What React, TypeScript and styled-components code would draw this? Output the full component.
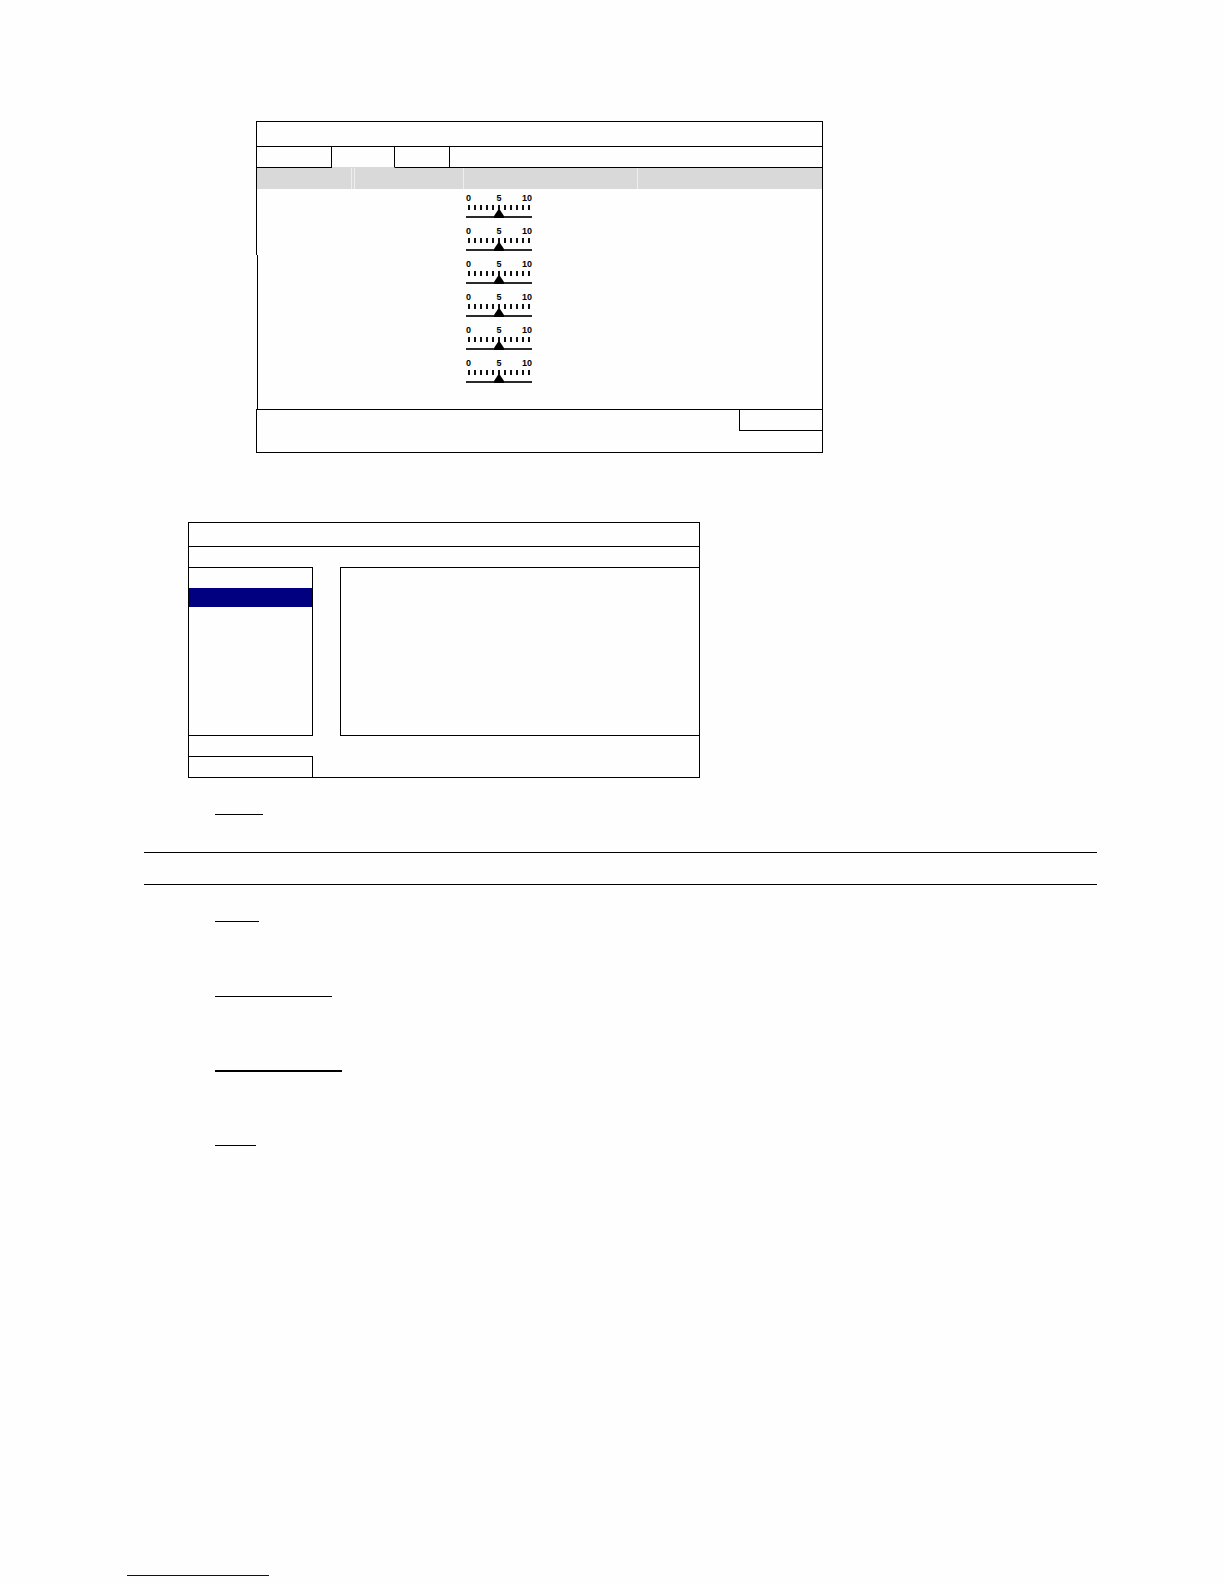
import { useState } from 'react'
import styled, { createGlobalStyle, css } from 'styled-components'

const colors = {
  page: '#fefefe',
  line: '#000000',
  header: '#d9d9d9',
  divider: '#efefef',
  selected: '#000080',
  link: '#0000a0',
}

const line = `1px solid ${colors.line}`

const GlobalStyle = createGlobalStyle`
  *,
  *::before,
  *::after {
    box-sizing: border-box;
  }

  body {
    margin: 0;
    background: ${colors.page};
    font-family: 'Liberation Sans', Arial, sans-serif;
    color: ${colors.line};
  }
`

const Page = styled.div`
  display: flex;
  flex-direction: column;
  min-height: 100vh;
  padding: 121px 127px 8px;
`

const resetButton = css`
  display: block;
  margin: 0;
  padding: 0;
  border: 0;
  border-radius: 0;
  background: transparent;
  font: inherit;
  cursor: pointer;
`

/* Sensitivity panel */

const SetupPanel = styled.section`
  width: 100%;
  max-width: 567px;
  margin-left: 129px;
  border-top: ${line};
  border-right: ${line};
`

const SetupTitle = styled.header`
  height: 25px;
  border-left: ${line};
  border-bottom: ${line};
`

const TabBar = styled.nav`
  display: flex;
  height: 21px;
  border-left: ${line};
`

const Tab = styled.button<{ $width: number; $active: boolean }>`
  ${resetButton}
  width: ${props => props.$width}px;
  border-right: ${line};
  border-bottom: 1px solid ${props => (props.$active ? colors.header : colors.line)};
`

const TabFiller = styled.div`
  flex: 1;
  border-bottom: ${line};
`

const ColumnHeader = styled.div`
  display: grid;
  grid-template-columns: 98px 109px 174px 1fr;
  height: 21px;
  border-left: ${line};
  background: ${colors.header};
`

const ColumnCell = styled.div<{ $divider?: 'single' | 'double' }>`
  border-right: ${props => {
    if (props.$divider === 'double') return `4px double ${colors.divider}`
    return props.$divider ? `1px solid ${colors.divider}` : '0'
  }};
`

const SettingRows = styled.div<{ $inset?: boolean }>`
  margin-left: ${props => (props.$inset ? 1 : 0)}px;
  padding-left: ${props => (props.$inset ? 208 : 209)}px;
  padding-bottom: ${props => (props.$inset ? 22 : 0)}px;
  border-left: ${line};
`

const SettingRow = styled.div`
  height: 33px;
  padding-top: 5px;
`

const Gauge = styled.label`
  display: block;
  width: 66px;
`

const Scale = styled.span`
  display: flex;
  justify-content: space-between;
  height: 8px;
  margin-bottom: 3px;
  font-size: 9px;
  font-weight: 700;
  line-height: 8px;
`

const ScaleMark = styled.span`
  flex: 1;

  &:nth-child(2) {
    text-align: center;
  }

  &:last-child {
    text-align: right;
  }
`

const Ticks = styled.span`
  display: flex;
  justify-content: space-between;
  height: 5px;
  padding: 0 2px;
`

const Tick = styled.span`
  width: 2px;
  background: #111111;
`

const thumb = css`
  width: 10px;
  height: 8px;
  border: 0;
  border-radius: 0;
  background: #000000;
  clip-path: polygon(40% 0, 60% 0, 100% 75%, 100% 100%, 0 100%, 0 75%);
`

const GaugeInput = styled.input`
  appearance: none;
  display: block;
  width: 100%;
  height: 8px;
  margin: 0;
  background: linear-gradient(#2a2a2a, #2a2a2a) bottom / 100% 2px no-repeat;
  cursor: pointer;

  &::-webkit-slider-thumb {
    appearance: none;
    ${thumb}
  }

  &::-moz-range-thumb {
    ${thumb}
  }
`

const SetupFooter = styled.footer`
  display: flex;
  justify-content: flex-end;
  align-items: flex-start;
  height: 44px;
  border: ${line};
  border-right: 0;
`

const FooterButton = styled.button`
  ${resetButton}
  width: 83px;
  height: 21px;
  border-left: ${line};
  border-bottom: ${line};
`

/* Menu panel */

const MenuPanel = styled.section`
  width: 100%;
  max-width: 512px;
  margin: 69px 0 0 61px;
  border: ${line};
`

const MenuTitle = styled.header`
  height: 24px;
  border-bottom: ${line};
`

const MenuBody = styled.div`
  display: flex;
  gap: 27px;
  height: 169px;
  margin: 20px 0;
`

const MenuList = styled.div`
  width: 124px;
  border: ${line};
  border-left: 0;
`

const MenuItem = styled.button<{ $selected: boolean }>`
  ${resetButton}
  width: 100%;
  height: ${props => (props.$selected ? 19 : 20)}px;
  background: ${props => (props.$selected ? colors.selected : 'transparent')};
`

const MenuContent = styled.div`
  flex: 1;
  border: ${line};
  border-right: 0;
`

const MenuExit = styled.button`
  ${resetButton}
  width: 124px;
  height: 21px;
  border-top: ${line};
  border-right: ${line};
`

/* Text below the panels */

const Term = styled.h3<{ $width: number; $height: number; $weight?: number }>`
  width: ${props => props.$width}px;
  height: ${props => props.$height}px;
  margin: 0 0 0 88px;
  border-bottom: ${props => props.$weight ?? 1}px solid ${colors.line};
`

const Note = styled.aside`
  height: 33px;
  margin: 37px 0 0 17px;
  border-top: ${line};
  border-bottom: ${line};
`

const PageFooter = styled.footer`
  margin-top: auto;
`

const FooterLink = styled.a`
  display: block;
  width: 142px;
  height: 16px;
  border-bottom: 1px solid ${colors.link};
`

const tabs = [75, 63, 55]
const tickCount = 11
const menuItems = [0, 1, 2, 3, 4, 5, 6]

const SensitivityGauge = ({ channel }: { channel: number }) => {
  const [value, setValue] = useState(5)

  return (
    <SettingRow>
      <Gauge>
        <Scale>
          <ScaleMark>0</ScaleMark>
          <ScaleMark>5</ScaleMark>
          <ScaleMark>10</ScaleMark>
        </Scale>
        <Ticks>
          {Array.from({ length: tickCount }, (_, i) => (
            <Tick key={i} />
          ))}
        </Ticks>
        <GaugeInput
          type="range"
          min={0}
          max={10}
          value={value}
          aria-label={`Level ${channel}`}
          onChange={e => setValue(Number(e.target.value))}
        />
      </Gauge>
    </SettingRow>
  )
}

const App: React.FC = () => {
  const [activeTab, setActiveTab] = useState(1)
  const [selectedItem, setSelectedItem] = useState(1)

  return (
    <>
      <GlobalStyle />
      <Page>
        <SetupPanel>
          <SetupTitle />
          <TabBar>
            {tabs.map((width, i) => (
              <Tab
                key={i}
                type="button"
                $width={width}
                $active={i === activeTab}
                aria-label={`Tab ${i + 1}`}
                onClick={() => setActiveTab(i)}
              />
            ))}
            <TabFiller />
          </TabBar>
          <ColumnHeader>
            <ColumnCell $divider="double" />
            <ColumnCell $divider="single" />
            <ColumnCell $divider="single" />
            <ColumnCell />
          </ColumnHeader>
          <SettingRows>
            {[1, 2].map(channel => (
              <SensitivityGauge key={channel} channel={channel} />
            ))}
          </SettingRows>
          <SettingRows $inset>
            {[3, 4, 5, 6].map(channel => (
              <SensitivityGauge key={channel} channel={channel} />
            ))}
          </SettingRows>
          <SetupFooter>
            <FooterButton type="button" aria-label="Exit setup" />
          </SetupFooter>
        </SetupPanel>

        <MenuPanel>
          <MenuTitle />
          <MenuBody>
            <MenuList>
              {menuItems.map(item => (
                <MenuItem
                  key={item}
                  type="button"
                  $selected={item === selectedItem}
                  aria-label={`Menu item ${item + 1}`}
                  onClick={() => setSelectedItem(item)}
                />
              ))}
            </MenuList>
            <MenuContent />
          </MenuBody>
          <MenuExit type="button" aria-label="Exit menu" />
        </MenuPanel>

        <Term $width={48} $height={37} />
        <Note />
        <Term $width={44} $height={37} />
        <Term $width={117} $height={75} />
        <Term $width={127} $height={75} $weight={2} />
        <Term $width={41} $height={74} />

        <PageFooter>
          <FooterLink href="#" aria-label="Contents" />
        </PageFooter>
      </Page>
    </>
  )
}

export default App
